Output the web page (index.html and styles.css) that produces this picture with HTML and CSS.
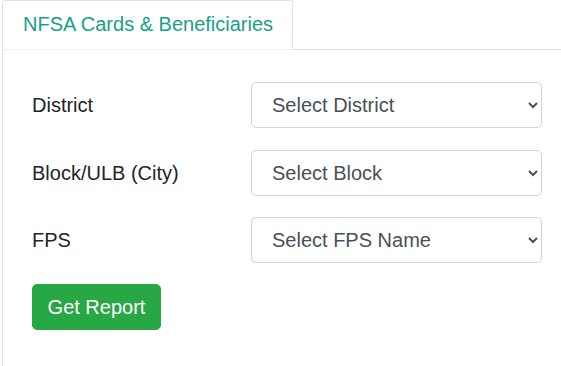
FILE: index.html
```html
<!DOCTYPE html>
<html>
<head>
<meta charset="utf-8">
<link rel="stylesheet" href="styles.css">
</head>
<body>
<div class="wrap">
  <div class="tabs">
    <div class="tab active">NFSA Cards &amp; Beneficiaries</div>
    <div class="tab-fill"></div>
  </div>
  <div class="panel">
    <form class="form">
      <div class="row first">
        <label class="label">District</label>
        <select class="select"><option>Select District</option></select>
      </div>
      <div class="row">
        <label class="label">Block/ULB (City)</label>
        <select class="select"><option>Select Block</option></select>
      </div>
      <div class="row">
        <label class="label">FPS</label>
        <select class="select"><option>Select FPS Name</option></select>
      </div>
      <div class="actions">
        <button type="button" class="btn">Get Report</button>
      </div>
    </form>
  </div>
</div>
</body>
</html>
```
FILE: styles.css
```css
html, body {
  margin: 0;
  padding: 0;
  background: #fff;
  overflow: hidden;
}
body {
  font-family: "Liberation Sans", Arial, sans-serif;
  color: #212529;
}
.wrap {
  margin-left: 2px;
}
.tabs {
  display: flex;
  height: 50px;
}
.tab {
  box-sizing: border-box;
  width: 291px;
  height: 50px;
  border: 1px solid #dee2e6;
  border-bottom-color: #eef0f2;
  border-radius: 3px 3px 0 0;
  padding: 12px 0 0 20px;
  font-size: 20px;
  color: #17a08a;
}
.tab-fill {
  flex: 1;
  border-bottom: 1px solid #dee2e6;
}
.panel {
  box-sizing: border-box;
  height: calc(100vh - 50px);
  border-left: 1px solid #dee2e6;
  padding: 32px 0 0 29px;
}
.form {
  display: flex;
  flex-direction: column;
  gap: 21px;
}
.row {
  display: grid;
  grid-template-columns: 219px 291px;
  align-items: center;
}
.row.first {
  margin-bottom: 1px;
}
.label {
  font-size: 20px;
  color: #212529;
}
.select {
  box-sizing: border-box;
  height: 46px;
  width: 291px;
  border: 1px solid #ced4da;
  border-radius: 5px;
  background: #fff;
  font-family: "Liberation Sans", Arial, sans-serif;
  font-size: 20px;
  color: #495057;
  padding: 0 12px 0 16px;
}
.actions {
  display: flex;
}
.btn {
  box-sizing: border-box;
  width: 129px;
  height: 46px;
  background: #28a745;
  border: 1px solid #28a745;
  border-radius: 5px;
  color: #fff;
  font-family: "Liberation Sans", Arial, sans-serif;
  font-size: 20px;
  padding: 0;
}
```
